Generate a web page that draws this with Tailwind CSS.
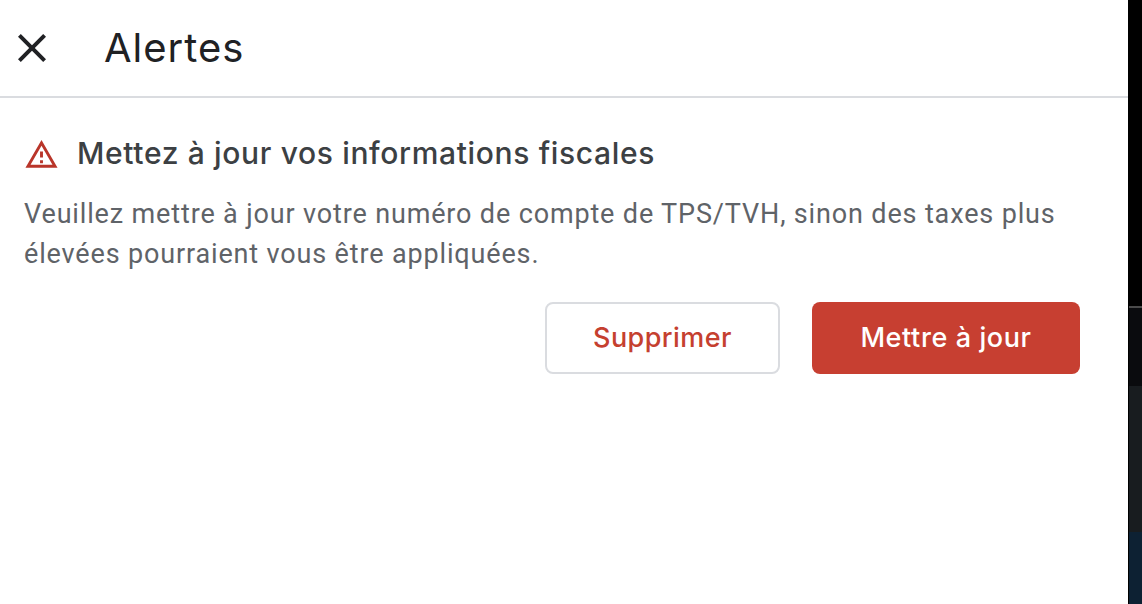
<!DOCTYPE html>
<html><head><meta charset="utf-8"><script src="https://cdn.jsdelivr.net/npm/@tailwindcss/browser@4"></script></head>
<body class="bg-white overflow-hidden">
<div class="flex w-[1142px] h-[604px] font-['Roboto',sans-serif]">
  <main class="flex-1 min-w-0">
    <header class="h-[98px] border-b-2 border-[#dadce0] flex items-center">
      <svg class="ml-[8px] w-[48px] h-[48px]" viewBox="0 0 24 24" fill="#202124"><path d="M19 6.41 17.59 5 12 10.59 6.41 5 5 6.41 10.59 12 5 17.59 6.41 19 12 13.41 17.59 19 19 17.59 13.41 12z"/></svg>
      <h1 class="ml-[48px] text-[40px] leading-[48px] text-[#202124] font-['Inter',sans-serif] tracking-[1px]">Alertes</h1>
    </header>
    <section class="pl-[24px] pr-[48px]">
      <div class="flex items-center mt-[36px] h-[40px]">
        <svg class="w-[35px] h-[35px] shrink-0" viewBox="0 0 24 24" fill="#b9352a"><path d="M12 5.99 19.53 19H4.47L12 5.99M12 2 1 21h22L12 2zm1 14h-2v2h2v-2zm0-6h-2v4h2v-4z"/></svg>
        <h2 class="ml-[18px] mb-[2px] text-[30px] leading-[40px] font-medium text-[#3c4043] font-['Inter',sans-serif] tracking-[0.65px]">Mettez à jour vos informations fiscales</h2>
      </div>
      <p class="mt-[20px] text-[27px] leading-[40px] text-[#5f6368] tracking-[0.85px]">Veuillez mettre à jour votre numéro de compte de TPS/TVH, sinon des taxes plus élevées pourraient vous être appliquées.</p>
      <div class="flex justify-end gap-[32px] mt-[28px]">
        <button class="w-[235px] h-[72px] rounded-[8px] border-2 border-[#dadce0] text-[#c5402f] text-[27px] font-medium font-['Inter',sans-serif] tracking-[0.45px]">Supprimer</button>
        <button class="w-[268px] h-[72px] rounded-[8px] bg-[#c73f31] text-white text-[27px] font-medium font-['Inter',sans-serif] tracking-[0.6px]">Mettre à jour</button>
      </div>
    </section>
  </main>
  <aside class="w-[14px] bg-black pl-px flex flex-col">
    <div class="h-[306px] shrink-0"></div>
    <div class="h-[80px] bg-[#0a0b0e] border-t-2 border-[#4a4a4a]"></div>
    <div class="h-[146px] bg-[#181c1f]"></div>
    <div class="flex-1 bg-[#0d2133]"></div>
  </aside>
</div>
</body></html>
